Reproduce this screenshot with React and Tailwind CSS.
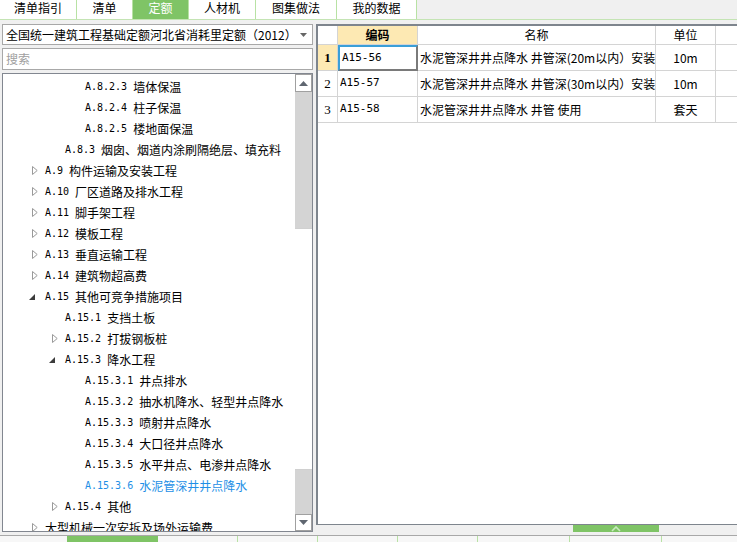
import React from "react";

const tabs = [
  { label: "清单指引", w: "w-[77px]" },
  { label: "清单", w: "w-[56px]" },
  { label: "定额", w: "w-[56px]", active: true },
  { label: "人材机", w: "w-[67px]" },
  { label: "图集做法", w: "w-[81px]" },
  { label: "我的数据", w: "w-[80px]" },
];

// [level, code, label, state(0 none / 1 collapsed / 2 expanded), selected]
const tree = [
  [2, "A.8.2.3", "墙体保温", 0],
  [2, "A.8.2.4", "柱子保温", 0],
  [2, "A.8.2.5", "楼地面保温", 0],
  [1, "A.8.3", "烟囱、烟道内涂刷隔绝层、填充料", 0],
  [0, "A.9", "构件运输及安装工程", 1],
  [0, "A.10", "厂区道路及排水工程", 1],
  [0, "A.11", "脚手架工程", 1],
  [0, "A.12", "模板工程", 1],
  [0, "A.13", "垂直运输工程", 1],
  [0, "A.14", "建筑物超高费", 1],
  [0, "A.15", "其他可竞争措施项目", 2],
  [1, "A.15.1", "支挡土板", 0],
  [1, "A.15.2", "打拔钢板桩", 1],
  [1, "A.15.3", "降水工程", 2],
  [2, "A.15.3.1", "井点排水", 0],
  [2, "A.15.3.2", "抽水机降水、轻型井点降水", 0],
  [2, "A.15.3.3", "喷射井点降水", 0],
  [2, "A.15.3.4", "大口径井点降水", 0],
  [2, "A.15.3.5", "水平井点、电渗井点降水", 0],
  [2, "A.15.3.6", "水泥管深井井点降水", 0, true],
  [1, "A.15.4", "其他", 1],
  [0, "", "大型机械一次安拆及场外运输费", 1],
];

const indent = ["pl-[29px]", "pl-[49px]", "pl-[69px]"];

const rows = [
  ["A15-56", "水泥管深井井点降水 井管深(20m以内）安装", "10m"],
  ["A15-57", "水泥管深井井点降水 井管深(30m以内）安装", "10m"],
  ["A15-58", "水泥管深井井点降水 井管 使用", "套天"],
];

function Toggle({ state }) {
  if (state === 1)
    return (
      <svg width="6" height="9" viewBox="0 0 6 9">
        <path d="M0.5 0.5 L5.2 4.5 L0.5 8.5 Z" fill="#fff" stroke="#9a9a9a" />
      </svg>
    );
  if (state === 2)
    return (
      <svg width="6" height="6" viewBox="0 0 6 6" className="-ml-[3px] mt-[1px]">
        <path d="M6 0 L6 6 L0 6 Z" fill="#3c3c3c" />
      </svg>
    );
  return null;
}

function TreeRow({ item }) {
  const [lvl, code, label, state, selected] = item;
  return (
    <div className={`h-[21px] flex items-center whitespace-nowrap ${indent[lvl]} ${selected ? "text-[#1e8fe6]" : "text-black"}`}>
      <span className="w-[13px] flex items-center">
        <Toggle state={state} />
      </span>
      {code && <span className="font-['DejaVu_Sans_Mono',monospace] text-[10px] mr-[6px]">{code}</span>}
      <span>{label}</span>
    </div>
  );
}

function Scrollbar() {
  return (
    <div className="w-[17px] shrink-0 flex flex-col bg-[#d4d4d4]">
      <div className="h-[18px] bg-white border border-[#a0a0a0] flex items-center justify-center">
        <svg width="9" height="5" viewBox="0 0 9 5"><path d="M4.5 0 L9 5 L0 5 Z" fill="#5f6670" /></svg>
      </div>
      <div className="h-[136px]" />
      <div className="h-[242px] bg-white border-y border-[#d0d0d0]" />
      <div className="flex-1" />
      <div className="h-[17px] bg-white border border-[#a0a0a0] flex items-center justify-center">
        <svg width="9" height="5" viewBox="0 0 9 5"><path d="M0 0 L9 0 L4.5 5 Z" fill="#5f6670" /></svg>
      </div>
    </div>
  );
}

export default function App() {
  return (
    <div className="w-[737px] h-[542px] overflow-hidden bg-[#f0f0f0] flex flex-col text-[12px] text-black font-['Noto_Sans_CJK_SC','Noto_Sans',sans-serif]">
      {/* top tabs */}
      <div className="h-[20px] shrink-0 flex border-b border-[#c4e4b4]">
        {tabs.map((t) => (
          <div
            key={t.label}
            className={`${t.w} h-full flex justify-center leading-[16px] border-r border-[#b8e2a4] ${t.active ? "bg-[#7fc466] text-white" : "bg-white"}`}
          >
            {t.label}
          </div>
        ))}
      </div>

      <div className="flex-1 flex min-h-0">
        {/* left panel */}
        <div className="w-[316px] shrink-0 flex flex-col pt-[4px] pl-[2px] pr-[3px] pb-[3px]">
          <div className="h-[21px] bg-white border border-[#a8a8a8] flex items-center justify-between pl-[3px] pr-[5px]">
            <span className="whitespace-nowrap">全国统一建筑工程基础定额河北省消耗里定额（2012）</span>
            <svg width="7" height="4" viewBox="0 0 7 4"><path d="M0 0 L7 0 L3.5 4 Z" fill="#666" /></svg>
          </div>
          <div className="h-[22px] mt-[3px] bg-white border border-[#a8a8a8] flex items-center pl-[3px] text-[#a0a0a0]">
            搜索
          </div>
          <div className="flex-1 mt-[3px] bg-white border border-[#828790] flex min-h-0">
            <div className="flex-1 overflow-hidden pt-[2px]">
              {tree.map((item, i) => (
                <TreeRow key={i} item={item} />
              ))}
            </div>
            <Scrollbar />
          </div>
        </div>

        {/* right panel */}
        <div className="flex-1 flex flex-col pt-[4px]">
          <div className="flex-1 bg-white border-t-2 border-l-2 border-b border-[#7e858d]">
            <div className="h-[19px] flex border-b border-[#d4d4d4]">
              <div className="w-[20px] border-r border-[#d4d4d4]" />
              <div className="w-[80px] border-r border-[#d4d4d4] bg-[#fde9b3] font-bold flex items-center justify-center">编码</div>
              <div className="w-[238px] border-r border-[#d4d4d4] flex items-center justify-center">名称</div>
              <div className="w-[60px] border-r border-[#d4d4d4] flex items-center justify-center">单位</div>
              <div className="flex-1" />
            </div>
            {rows.map((r, i) => (
              <div key={r[0]} className="h-[26px] flex border-b border-[#d4d4d4]">
                <div className={`w-[20px] border-r border-[#d4d4d4] flex items-center justify-center font-['Liberation_Serif',serif] text-[13px] ${i === 0 ? "bg-[#fde9b3] font-bold" : ""}`}>
                  {i + 1}
                </div>
                <div
                  className={`w-[80px] flex items-center pl-[2px] font-['DejaVu_Sans_Mono',monospace] text-[11px] ${
                    i === 0 ? "border-2 border-t-[#3a9fd8] border-l-[#3a9fd8] border-r-[#7a7a7a] border-b-[#7a7a7a] -mb-[1px]" : "border-r border-[#d4d4d4]"
                  }`}
                >
                  {r[0]}
                </div>
                <div className="w-[238px] border-r border-[#d4d4d4] flex items-center pl-[2px] whitespace-nowrap overflow-hidden">{r[1]}</div>
                <div className="w-[60px] border-r border-[#d4d4d4] flex items-center justify-center">{r[2]}</div>
                <div className="flex-1" />
              </div>
            ))}
          </div>
          <div className="h-[10px] shrink-0 flex">
            <div className="w-[257px]" />
            <div className="w-[86px] h-[7px] bg-[#7fc466] flex items-center justify-center">
              <svg width="10" height="6" viewBox="0 0 10 6"><path d="M1 5 L5 1 L9 5" fill="none" stroke="#c9ecc0" strokeWidth="1.6" /></svg>
            </div>
          </div>
        </div>
      </div>

      {/* bottom tab strip */}
      <div className="h-[7px] shrink-0 flex border-t border-[#a8a8a8] bg-[#f7f7f7]">
        <div className="w-[67px]" />
        <div className="w-[91px] bg-[#7fc466]" />
        <div className="w-[80px] border-r border-[#b8e2a4]" />
        <div className="w-[80px] border-r border-[#b8e2a4]" />
        <div className="w-[80px] border-r border-[#b8e2a4]" />
        <div className="w-[80px] border-r border-[#b8e2a4]" />
        <div className="w-[92px] border-r border-[#b8e2a4]" />
        <div className="w-[92px] border-r border-[#b8e2a4]" />
      </div>
    </div>
  );
}
